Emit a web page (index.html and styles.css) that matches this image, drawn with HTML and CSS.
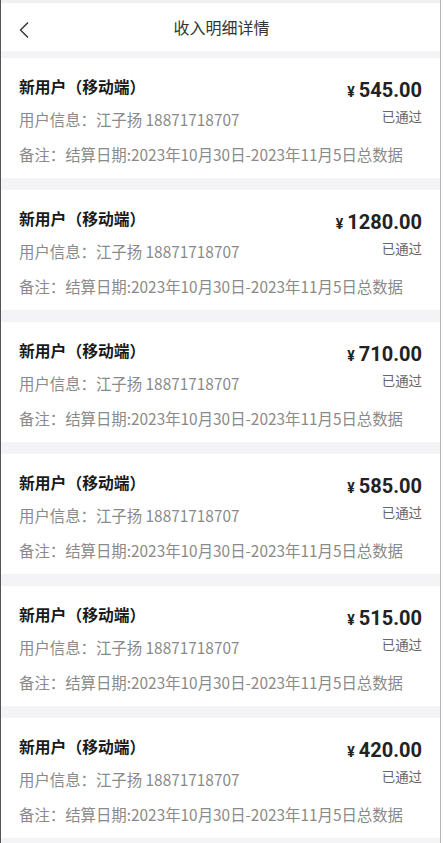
FILE: index.html
```html
<!DOCTYPE html>
<html lang="zh">
<head>
<meta charset="utf-8">
<link rel="stylesheet" href="styles.css">
</head>
<body>
<div class="page">
  <div class="topstrip"></div>
  <header class="header">
    <svg class="back" width="12" height="18" viewBox="0 0 12 18"><polyline points="10,1.5 2.5,9 10,16.5" fill="none" stroke="#333" stroke-width="1.4"/></svg>
    <div class="title">收入明细详情</div>
  </header>
  <div class="list">
    <div class="card">
      <div class="left">
        <div class="name">新用户（移动端）</div>
        <div class="info">用户信息：江子扬 18871718707</div>
      </div>
      <div class="right">
        <div class="amount"><span class="yen">¥</span>545.00</div>
        <div class="status">已通过</div>
      </div>
      <div class="remark">备注：结算日期:2023年10月30日-2023年11月5日总数据</div>
    </div>
    <div class="card">
      <div class="left">
        <div class="name">新用户（移动端）</div>
        <div class="info">用户信息：江子扬 18871718707</div>
      </div>
      <div class="right">
        <div class="amount"><span class="yen">¥</span>1280.00</div>
        <div class="status">已通过</div>
      </div>
      <div class="remark">备注：结算日期:2023年10月30日-2023年11月5日总数据</div>
    </div>
    <div class="card">
      <div class="left">
        <div class="name">新用户（移动端）</div>
        <div class="info">用户信息：江子扬 18871718707</div>
      </div>
      <div class="right">
        <div class="amount"><span class="yen">¥</span>710.00</div>
        <div class="status">已通过</div>
      </div>
      <div class="remark">备注：结算日期:2023年10月30日-2023年11月5日总数据</div>
    </div>
    <div class="card">
      <div class="left">
        <div class="name">新用户（移动端）</div>
        <div class="info">用户信息：江子扬 18871718707</div>
      </div>
      <div class="right">
        <div class="amount"><span class="yen">¥</span>585.00</div>
        <div class="status">已通过</div>
      </div>
      <div class="remark">备注：结算日期:2023年10月30日-2023年11月5日总数据</div>
    </div>
    <div class="card">
      <div class="left">
        <div class="name">新用户（移动端）</div>
        <div class="info">用户信息：江子扬 18871718707</div>
      </div>
      <div class="right">
        <div class="amount"><span class="yen">¥</span>515.00</div>
        <div class="status">已通过</div>
      </div>
      <div class="remark">备注：结算日期:2023年10月30日-2023年11月5日总数据</div>
    </div>
    <div class="card">
      <div class="left">
        <div class="name">新用户（移动端）</div>
        <div class="info">用户信息：江子扬 18871718707</div>
      </div>
      <div class="right">
        <div class="amount"><span class="yen">¥</span>420.00</div>
        <div class="status">已通过</div>
      </div>
      <div class="remark">备注：结算日期:2023年10月30日-2023年11月5日总数据</div>
    </div>
  </div>
</div>
</body>
</html>
```
FILE: styles.css
```css
html, body {
  margin: 0;
  padding: 0;
  background: #fff;
}
body {
  font-family: "Noto Sans CJK SC", "Noto Sans", sans-serif;
  overflow: hidden;
}
.page {
  width: 439px;
  height: 843px;
  border-left: 1px solid #555;
  border-right: 1px solid #b5b5b5;
  margin-right: 2px;
  background: #f4f4f6;
  overflow: hidden;
}
.topstrip {
  height: 3px;
  background: #f0f0f2;
}
.header {
  height: 48px;
  background: #fff;
  position: relative;
  display: flex;
  align-items: center;
  justify-content: center;
}
.back {
  position: absolute;
  left: 17px;
  top: 18px;
}
.title {
  font-size: 16px;
  color: #333;
  margin-left: 2px;
}
.list {
  padding-top: 7px;
  display: flex;
  flex-direction: column;
  gap: 12px;
}
.card {
  background: #fff;
  height: 120px;
  box-sizing: border-box;
  padding: 17px 18px 0 18px;
  display: grid;
  grid-template-columns: 1fr auto;
}
.name {
  font-size: 15.8px;
  font-weight: bold;
  color: #1a1a1a;
  line-height: 24px;
}
.info {
  margin-top: 8px;
  font-size: 15.4px;
  color: #8a8a8a;
  line-height: 24px;
}
.remark {
  grid-column: 1 / 3;
  margin-top: -2px;
  font-size: 15.4px;
  color: #8a8a8a;
  line-height: 24px;
  white-space: nowrap;
}
.right {
  display: flex;
  flex-direction: column;
  align-items: flex-end;
}
.amount {
  font-family: Roboto, "Noto Sans", sans-serif;
  font-weight: bold;
  font-size: 20px;
  color: #222;
  line-height: 28px;
  margin-top: 1px;
}
.yen {
  font-size: 14px;
  margin-right: 4px;
}
.status {
  font-size: 13.4px;
  color: #666;
  line-height: 20px;
  margin-top: 0px;
}
```
